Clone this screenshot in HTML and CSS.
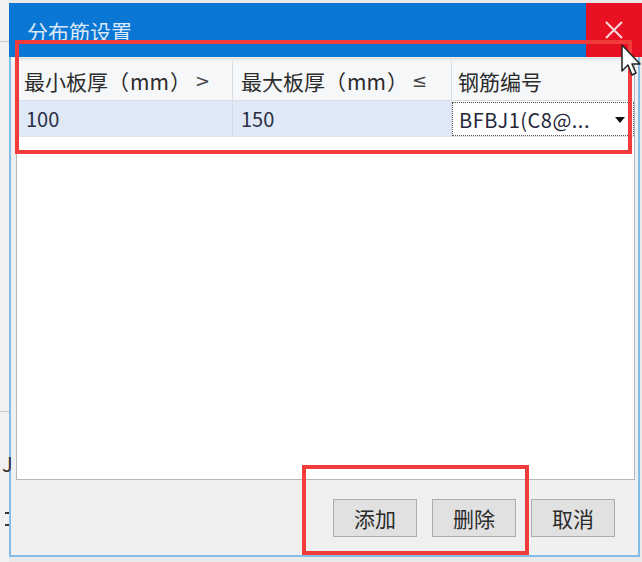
FILE: index.html
```html
<!DOCTYPE html>
<html lang="zh">
<head>
<meta charset="utf-8">
<title>分布筋设置</title>
<link rel="stylesheet" href="styles.css">
</head>
<body>
<div class="app-strip">
  <div class="strip-line strip-line-top"></div>
  <div class="strip-line strip-line-bottom"></div>
  <span class="strip-j">J</span>
  <span class="strip-dash strip-dash-1"></span>
  <span class="strip-dash strip-dash-2"></span>
</div>
<div class="dialog">
  <div class="titlebar">
    <span class="title">分布筋设置</span>
    <div class="close-btn">
      <svg width="18" height="18" viewBox="0 0 18 18"><path d="M1 1 L17 17 M17 1 L1 17" stroke="#f6d9dc" stroke-width="2" fill="none"/></svg>
    </div>
  </div>
  <div class="dialog-body">
    <div class="grid">
      <div class="grid-row grid-head">
        <div class="cell c1">最小板厚（<span class="latin">mm</span>）<span class="sym">&gt;</span></div>
        <div class="cell c2">最大板厚（<span class="latin">mm</span>）<span class="sym">≤</span></div>
        <div class="cell c3">钢筋编号</div>
      </div>
      <div class="grid-row grid-data">
        <div class="cell c1">100</div>
        <div class="cell c2">150</div>
        <div class="cell c3 combo">
          <span class="combo-text">BFBJ1(C8@...</span>
          <svg class="combo-arrow" width="10" height="6" viewBox="0 0 10 6"><path d="M0 0 H10 L5 6 Z" fill="#111"/></svg>
        </div>
      </div>
    </div>
    <div class="footer">
      <button class="btn">添加</button>
      <button class="btn">删除</button>
      <button class="btn">取消</button>
    </div>
  </div>
</div>
<div class="mark mark-table"></div>
<div class="mark mark-buttons"></div>
<svg class="cursor" width="20" height="34" viewBox="0 0 20 34"><path d="M1 1 L1 27 L7 21 L11 31 L15 29 L11 20 L19 20 Z" fill="#fff" stroke="#222" stroke-width="1.5" stroke-linejoin="round"/></svg>
</body>
</html>
```
FILE: styles.css
```css
* { box-sizing: border-box; }
html, body { margin: 0; padding: 0; }
body {
  width: 642px;
  height: 562px;
  overflow: hidden;
  background: #e9e9e9;
  display: flex;
  align-items: flex-start;
  font-family: "Noto Sans CJK SC", "Noto Sans", sans-serif;
  color: #2b2b2b;
  position: relative;
}
.app-strip {
  width: 9px;
  height: 562px;
  flex: none;
  background: #f1f1f1;
  position: relative;
}
.strip-line { position: absolute; left: 0; width: 9px; height: 1px; background: #c6c6c6; }
.strip-line-top { top: 41px; }
.strip-line-bottom { top: 411px; }
.strip-j { position: absolute; left: 2px; top: 452px; font-size: 20px; line-height: 24px; color: #333; }
.strip-dash { position: absolute; left: 5px; width: 4px; height: 2px; background: #333; }
.strip-dash-1 { top: 512px; }
.strip-dash-2 { top: 524px; }

.dialog {
  width: 633px;
  flex: none;
  margin-top: 3px;
  display: flex;
  flex-direction: column;
}
.titlebar {
  height: 54px;
  background: #0a77d5;
  display: flex;
  align-items: center;
  justify-content: space-between;
}
.title {
  padding-left: 18px;
  padding-top: 2px;
  font-size: 21px;
  color: #dbe9f8;
}
.close-btn {
  width: 56px;
  height: 54px;
  background: #e81123;
  display: flex;
  align-items: center;
  justify-content: center;
}
.dialog-body {
  width: 631px;
  height: 500px;
  background: #f0f0f0;
  border-left: 2px solid #85bde9;
  border-right: 2px solid #85bde9;
  border-bottom: 2px solid #85bde9;
  padding: 1px 3px 0 5px;
  display: flex;
  flex-direction: column;
}
.grid {
  width: 619px;
  height: 422px;
  background: #fff;
  border: 1px solid #b7b7b7;
  border-top-color: #dcdcdc;
}
.grid-row { display: flex; }
.grid-head {
  height: 42px;
  background: #f6f7f9;
  border-bottom: 1px solid #dadde2;
  border-top: 2px solid #eef1f4;
}
.grid-data { height: 36px; border-bottom: 1px solid #dfe3ea; }
.cell {
  display: flex;
  align-items: center;
  font-size: 21px;
  border-right: 1px solid #d8dbe0;
  white-space: nowrap;
}
.latin { padding: 0 1px; }
.sym { font-family: "DejaVu Sans", sans-serif; font-size: 18px; margin-left: 4px; color: #444; }
.c1 { width: 216px; padding-left: 7px; }
.c2 { width: 219px; padding-left: 8px; }
.c3 { flex: 1; padding-left: 6px; border-right: none; }
.grid-data .c1, .grid-data .c2 { background: #dfe8f6; color: #2a2f45; font-size: 20px; }
.grid-data .c1 { padding-left: 9px; }
.combo {
  background: #fff;
  border: 1px dotted #555;
  justify-content: space-between;
  padding-right: 8px;
  margin: 1px 0 0 0;
  color: #24283a;
  font-size: 20px;
}
.combo-text { letter-spacing: 0.5px; }
.combo-arrow { margin-top: 1px; }

.footer {
  flex: 1;
  display: flex;
  justify-content: flex-end;
  align-items: flex-start;
  gap: 15px;
  padding: 19px 20px 0 0;
}
.btn {
  width: 84px;
  height: 38px;
  background: #e1e1e1;
  border: 1px solid #adadad;
  font-family: "Noto Sans CJK SC", sans-serif;
  font-size: 21px;
  color: #2a2a2a;
  padding: 0;
}

.mark {
  position: absolute;
  border: 4px solid #f23b3b;
}
.mark-table { left: 15px; top: 40px; width: 617px; height: 114px; }
.mark-buttons { left: 302px; top: 465px; width: 227px; height: 90px; }
.cursor { position: absolute; left: 621px; top: 44px; }
```
